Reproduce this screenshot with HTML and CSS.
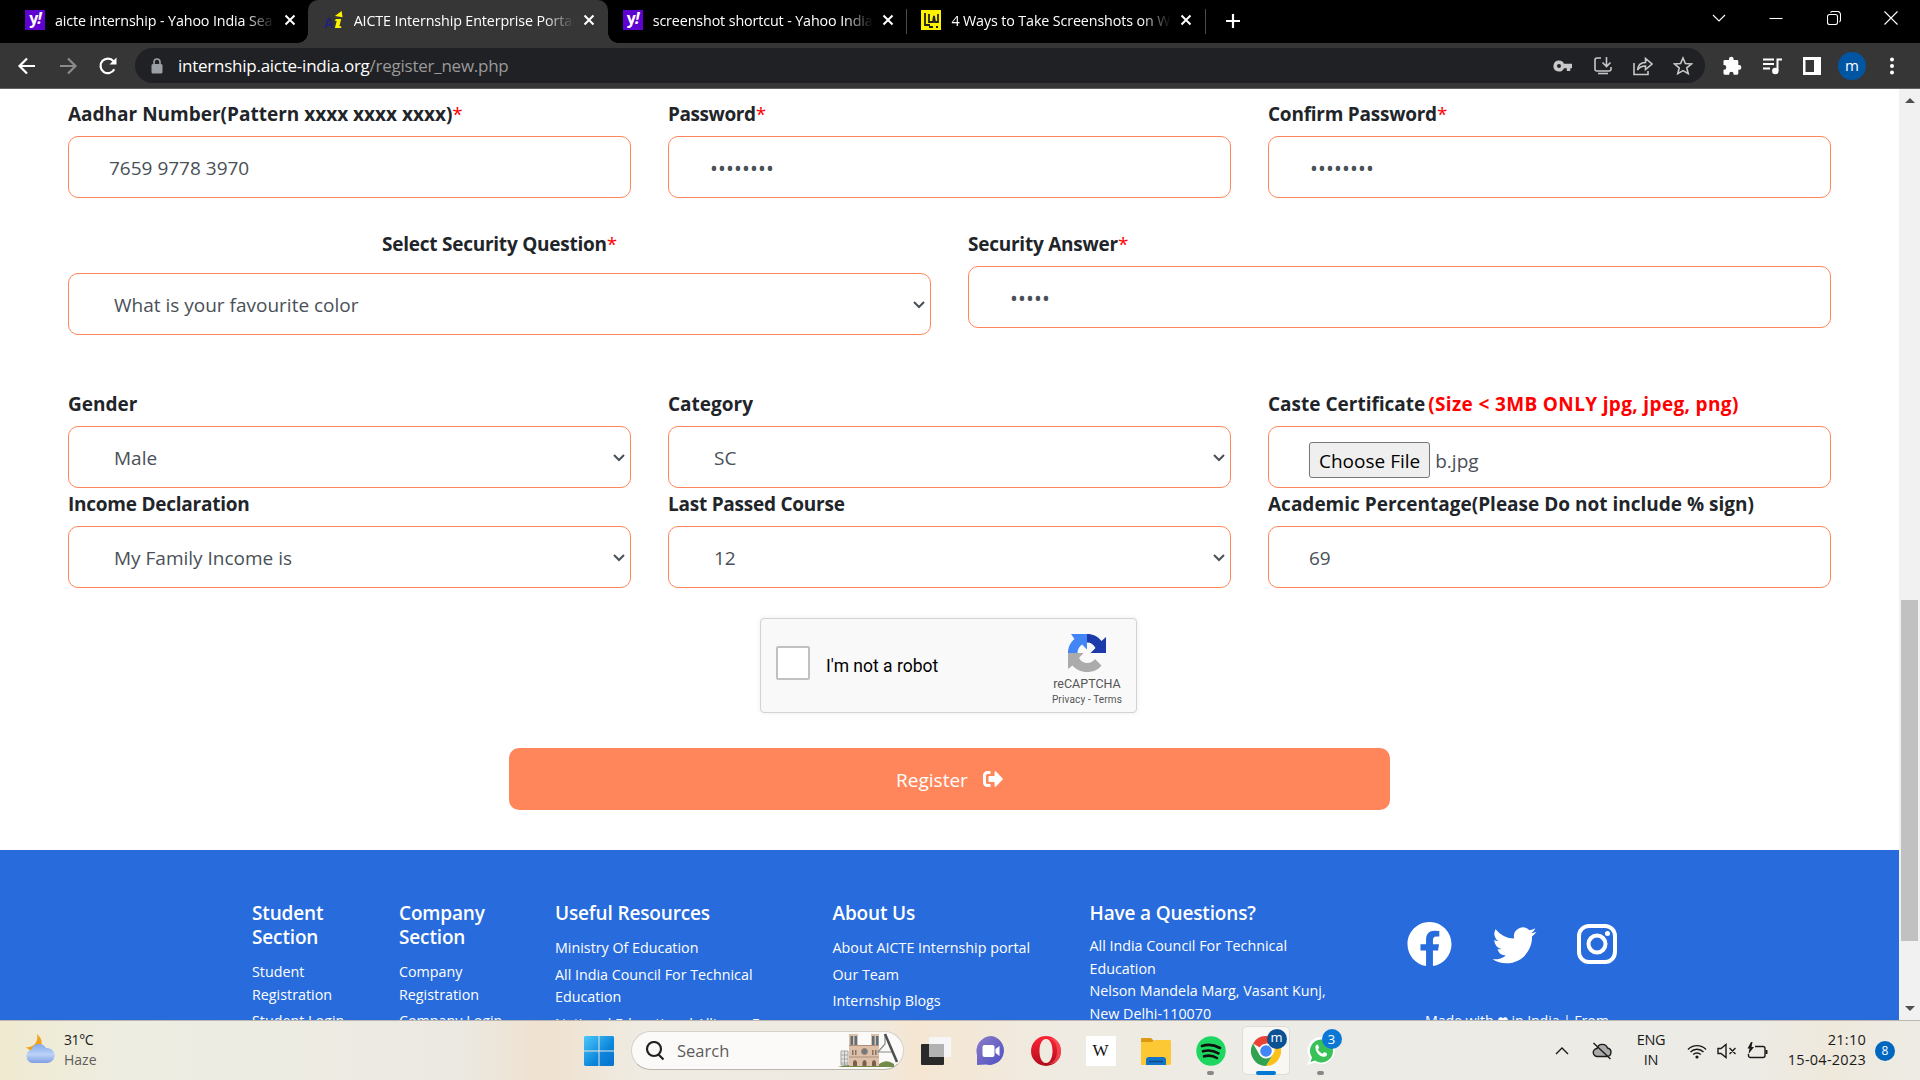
FILE: index.html
```html
<!DOCTYPE html>
<html lang="en">
<head>
<meta charset="utf-8">
<title>AICTE Internship Enterprise Portal</title>
<link rel="stylesheet" href="styles.css">
</head>
<body>
<div class="screen">
  <header class="tabstrip">
    <div class="tab">
      <span class="favicon yahoo">y<i>!</i></span><span class="tab-title">aicte internship - Yahoo India Sea</span>
      <svg class="tab-close" viewBox="0 0 12 12"><path d="M1.5 1.5l9 9M10.5 1.5l-9 9"/></svg>
    </div>
    <div class="tab active">
      <span class="favicon aicte"><b>A</b><svg viewBox="0 0 10 22"><path d="M1 6.500L8.500 1l1 7z"/><path d="M2 10h6L6 18h2v2H1l2-8H1z"/></svg></span><span class="tab-title">AICTE Internship Enterprise Portal</span>
      <svg class="tab-close" viewBox="0 0 12 12"><path d="M1.5 1.5l9 9M10.5 1.5l-9 9"/></svg>
    </div>
    <div class="tab divided">
      <span class="favicon yahoo">y<i>!</i></span><span class="tab-title">screenshot shortcut - Yahoo India</span>
      <svg class="tab-close" viewBox="0 0 12 12"><path d="M1.5 1.5l9 9M10.5 1.5l-9 9"/></svg>
    </div>
    <div class="tab divided">
      <span class="favicon lw"><svg viewBox="0 0 20 20"><path d="M4 3v12h5M8 4v8h4l1-6 1 6h3V4M8 17h4M15 17h2" fill="none" stroke="#222" stroke-width="1.8"/></svg></span><span class="tab-title">4 Ways to Take Screenshots on Wi</span>
      <svg class="tab-close" viewBox="0 0 12 12"><path d="M1.5 1.5l9 9M10.5 1.5l-9 9"/></svg>
    </div>
    <svg class="new-tab" viewBox="0 0 16 16"><path d="M8 1v14M1 8h14"/></svg>
    <div class="window-controls">
      <svg viewBox="0 0 14 14"><path d="M1 4l6 6 6-6"/></svg>
      <svg viewBox="0 0 14 14"><path d="M.5 7.5h13"/></svg>
      <svg viewBox="0 0 14 14"><path d="M2.5 3.5h6a2 2 0 012 2v6a2 2 0 01-2 2h-6a2 2 0 01-2-2v-6a2 2 0 012-2zM3.5 1.5q.5-1 2-1h5a3 3 0 013 3v5q0 2-1 2.500"/></svg>
      <svg viewBox="0 0 14 14"><path d="M.5.5l13 13M13.500.5l-13 13"/></svg>
    </div>
  </header>

  <nav class="toolbar">
    <div class="nav-buttons">
      <svg viewBox="0 0 20 20"><path d="M18 10H3M10 2.500L2.500 10l7.500 7.500"/></svg>
      <svg class="dim" viewBox="0 0 20 20"><path d="M2 10h15M10 2.500l7.500 7.500-7.500 7.500"/></svg>
      <svg viewBox="0 0 20 20"><path d="M16.300 13.300A7.300 7.300 0 1115.500 5.200"/><path d="M18.500 1.500v7h-7z" fill="#fff" stroke="none"/></svg>
    </div>
    <div class="omnibox">
      <svg class="lock" viewBox="0 0 12 16"><rect x=".5" y="6" width="11" height="9.500" rx="1.500" fill="#9aa0a6"/><path d="M3 7V4a3 3 0 016 0v3" fill="none" stroke="#9aa0a6" stroke-width="1.600"/></svg>
      <span class="url">internship.aicte-india.org<span>/register_new.php</span></span>
      <div class="omni-icons">
        <svg viewBox="0 0 20 20"><path fill="#c7c7c7" fill-rule="evenodd" d="M6 4.500a5.500 5.500 0 015 3.300h8v4.400h-1.700V15h-3.500v-2.800H11A5.500 5.500 0 116 4.500zM6 8a2 2 0 100 4 2 2 0 000-4z"/></svg>
        <svg viewBox="0 0 20 20"><path class="ln" d="M8 2H4a2 2 0 00-2 2v9a2 2 0 002 2h12a2 2 0 002-2v-2M13.500 1v9M9.500 6.500l4 4 4-4"/><path class="ln" d="M5 17.500h10" stroke-width="3"/></svg>
        <svg viewBox="0 0 20 20"><path class="ln" d="M1 7v11.500h14V15M4.500 14C5 9 8 6.500 12.500 6.500V2.500L19 8l-6.500 5.500V10C9 10 6.500 11 4.500 14z"/></svg>
        <svg viewBox="0 0 20 20"><path class="ln" d="M10 2l2.400 5.500 6 .5-4.600 3.900 1.400 5.800L10 14.600l-5.200 3.100 1.400-5.800L1.600 8l6-.5z"/></svg>
      </div>
    </div>
    <div class="tool-icons">
      <svg viewBox="0 0 20 20"><path fill="#fff" d="M7 4V3a2.300 2.300 0 014.600 0v1H15a1.300 1.300 0 011.300 1.300V9h.7a2.400 2.400 0 010 4.800h-.7v3.400A1.500 1.500 0 0115 18.800h-3.400V18a2.200 2.200 0 00-4.400 0v.8H3a1.500 1.500 0 01-1.500-1.500v-3.600H2a2.300 2.300 0 000-4.600h-.5V5.300A1.300 1.300 0 012.800 4z"/></svg>
      <svg viewBox="0 0 20 20"><path fill="none" stroke="#fff" stroke-width="2" d="M1 3.500h11M1 8h11M1 12.500h7M15.500 15V3.500H20"/><circle cx="13.300" cy="15" r="3.200" fill="#fff"/></svg>
      <svg viewBox="0 0 20 20"><path fill="#fff" fill-rule="evenodd" d="M1 1h18v18H1zM3.500 4v12H12V4z"/></svg>
      <span class="avatar">m</span>
      <svg viewBox="0 0 20 20"><g fill="#fff"><circle cx="10" cy="3.500" r="2"/><circle cx="10" cy="10" r="2"/><circle cx="10" cy="16.500" r="2"/></g></svg>
    </div>
  </nav>

  <div class="viewport">
    <main class="page">
      <form class="form">
        <div class="row">
          <div class="field"><label>Aadhar Number(Pattern xxxx xxxx xxxx)<em>*</em></label><div class="box">7659 9778 3970</div></div>
          <div class="field"><label class="tight">Password<em>*</em></label><div class="box dots">••••••••</div></div>
          <div class="field"><label class="snug">Confirm Password<em>*</em></label><div class="box dots">••••••••</div></div>
        </div>
        <div class="row security">
          <div class="field question"><label class="snug">Select Security Question<em>*</em></label><div class="box select">What is your favourite color<svg viewBox="0 0 12 8"><path d="M1 1l5 5 5-5"/></svg></div></div>
          <div class="field"><label class="snug">Security Answer<em>*</em></label><div class="box dots">•••••</div></div>
        </div>
        <div class="row profile">
          <div class="field"><label>Gender</label><div class="box select">Male<svg viewBox="0 0 12 8"><path d="M1 1l5 5 5-5"/></svg></div></div>
          <div class="field"><label>Category</label><div class="box select">SC<svg viewBox="0 0 12 8"><path d="M1 1l5 5 5-5"/></svg></div></div>
          <div class="field"><label>Caste Certificate <em class="note">(Size &lt; 3MB ONLY jpg, jpeg, png)</em></label><div class="box file"><span class="choose">Choose File</span><span>b.jpg</span></div></div>
        </div>
        <div class="row">
          <div class="field"><label class="snug">Income Declaration</label><div class="box select">My Family Income is<svg viewBox="0 0 12 8"><path d="M1 1l5 5 5-5"/></svg></div></div>
          <div class="field"><label class="snug">Last Passed Course</label><div class="box select">12<svg viewBox="0 0 12 8"><path d="M1 1l5 5 5-5"/></svg></div></div>
          <div class="field"><label>Academic Percentage(Please Do not include % sign)</label><div class="box">69</div></div>
        </div>
        <div class="captcha">
          <span class="checkbox"></span>
          <span class="robot">I'm not a robot</span>
          <div class="brand">
            <svg viewBox="0 0 40 40">
              <path fill="#1c3aa9" d="M20 1c6 0 11 2.600 14.500 7L39 4v16H23.500l5-5c-1.700-3.500-4.500-5.500-8.500-5.500z"/>
              <path fill="#4285f4" d="M20 1v15.500l-5-5c-3 2-4.500 5-4.500 8.500H1c0-6 2.500-10.500 6.500-14L4 1z"/>
              <path fill="#ababab" d="M1 20h15.500l-4.500 5c2 3.200 4.700 5 8 5 3.500 0 6-1.300 8-4l6.500 6.500C31 37 26 39 20 39c-6 0-11-2.500-14.500-6.500L1 36z"/>
            </svg>
            <span class="recaptcha">reCAPTCHA</span>
            <span class="terms">Privacy - Terms</span>
          </div>
        </div>
        <div class="register"><span>Register</span><svg viewBox="0 0 20 16"><path d="M7.500 1.500H4.500a3 3 0 00-3 3v7a3 3 0 003 3h3" fill="none" stroke="#fff" stroke-width="3"/><path fill="#fff" d="M11.500 1.200c0-1 .9-1.300 1.500-.6l6.500 6.600c.4.400.4 1.100 0 1.500L13 15.400c-.7.700-1.500.3-1.500-.6V11h-5c-.6 0-1-.4-1-1V6c0-.6.4-1 1-1h5z"/></svg></div>
      </form>
      <footer class="footer">
        <div class="col narrow"><h4>Student<br>Section</h4><p>Student<br>Registration</p><p>Student Login</p></div>
        <div class="col narrow"><h4>Company<br>Section</h4><p>Company<br>Registration</p><p>Company Login</p></div>
        <div class="col"><h4>Useful Resources</h4><p>Ministry Of Education</p><p>All India Council For Technical<br>Education</p><p>National Educational Alliance For</p></div>
        <div class="col"><h4>About Us</h4><p>About AICTE Internship portal</p><p>Our Team</p><p>Internship Blogs</p></div>
        <div class="col address"><h4>Have a Questions?</h4><p>All India Council For Technical<br>Education<br>Nelson Mandela Marg, Vasant Kunj,<br>New Delhi-110070</p></div>
        <div class="social">
          <div class="social-icons">
            <svg viewBox="0 0 16 16"><path d="M16 8.049c0-4.446-3.582-8.050-8-8.050C3.580 0-.002 3.603-.002 8.050c0 4.017 2.926 7.347 6.750 7.951v-5.625h-2.030V8.050H6.750V6.275c0-2.017 1.195-3.131 3.022-3.131.876 0 1.791.157 1.791.157v1.980h-1.009c-.993 0-1.303.621-1.303 1.258v1.510h2.218l-.354 2.326H9.250V16c3.824-.604 6.750-3.934 6.750-7.951z"/></svg>
            <svg viewBox="0 0 16 16"><path d="M5.026 15c6.038 0 9.341-5.003 9.341-9.334 0-.14 0-.282-.006-.422A6.685 6.685 0 0 0 16 3.542a6.658 6.658 0 0 1-1.889.518 3.301 3.301 0 0 0 1.447-1.817 6.533 6.533 0 0 1-2.087.793A3.286 3.286 0 0 0 7.875 6.030a9.325 9.325 0 0 1-6.767-3.429 3.289 3.289 0 0 0 1.018 4.382A3.323 3.323 0 0 1 .640 6.575v.045a3.288 3.288 0 0 0 2.632 3.218 3.203 3.203 0 0 1-.865.115 3.230 3.230 0 0 1-.614-.057 3.283 3.283 0 0 0 3.067 2.277A6.588 6.588 0 0 1 .780 13.580a6.320 6.320 0 0 1-.780-.045A9.344 9.344 0 0 0 5.026 15z"/></svg>
            <svg class="insta" viewBox="0 0 40 40"><rect x="2" y="2" width="36" height="36" rx="10"/><circle cx="20" cy="20" r="8.500"/><circle class="fill" cx="30.500" cy="9.500" r="2.500"/></svg>
          </div>
          <p>Made with <svg class="heart" viewBox="0 0 10 9"><path d="M5 9L.8 4.800C-1 2 1.500-.8 4 .6L5 1.400 6 .6c2.500-1.400 5 1.400 3.200 4.200z"/></svg> in India | From</p>
        </div>
      </footer>
    </main>
    <div class="scrollbar"><span class="up"></span><span class="thumb"></span><span class="down"></span></div>
  </div>

  <div class="taskbar">
    <div class="weather">
      <svg viewBox="0 0 30 30">
        <defs><linearGradient id="cl" x1="0" y1="0" x2="0" y2="1"><stop offset="0" stop-color="#84a9ec"/><stop offset=".55" stop-color="#bcd2f7"/><stop offset="1" stop-color="#7f9fe4"/></linearGradient></defs>
        <path d="M12 0c5 4 7 11 1 15-4 3-9 2-12-2 6 1 13-4 11-13z" fill="#f0a21c"/>
        <path d="M7 29a7 7 0 01-.5-13.500A8 8 0 0121 14a7.500 7.500 0 012 15z" fill="url(#cl)"/>
      </svg>
      <div><span>31°C</span><span class="haze">Haze</span></div>
    </div>
    <svg class="start" viewBox="0 0 30 30">
      <defs><linearGradient id="wn" gradientUnits="userSpaceOnUse" x1="0" y1="0" x2="30" y2="30"><stop offset="0" stop-color="#4cc8fa"/><stop offset=".6" stop-color="#0c86dc"/><stop offset="1" stop-color="#0670cc"/></linearGradient></defs>
      <path fill="url(#wn)" d="M1 0h13.500v14.500H0V1zM15.500 0H29l1 1v13.500H15.500zM0 15.500h14.500V30H1l-1-1zM15.500 15.500H30V29l-1 1H15.500z"/>
    </svg>
    <div class="search">
      <svg class="glass" viewBox="0 0 20 20"><circle cx="9" cy="8" r="7"/><path d="M13.500 13.500l5 5"/></svg>
      <span>Search</span>
      <svg class="cathedral" viewBox="0 0 62 36">
        <path d="M0 34q8-3 18-2h22q8-7 16-1v3z" fill="#728b48"/>
        <path d="M3 18h7v14H3z" fill="#e6e6e6" stroke="#a5a5a5"/><path d="M3 22h7M3 26h7M3 30h7M6.500 18v14" stroke="#a5a5a5" fill="none"/>
        <path d="M11 1h9v11h13V1h8v32H11z" fill="#dcc0aa"/>
        <path d="M12.500 3h2.500v9h-2.500zM16.500 3H19v9h-2.500zM34 3h2.500v9H34zM38 3h2.500v9H38z" fill="#5b7078"/>
        <path d="M11 12.500h30M11 24h30" stroke="#b08e78" stroke-width="1.200"/>
        <circle cx="26.500" cy="18.500" r="3" fill="#6b7a80" stroke="#a5846f"/>
        <path d="M15 33v-4q2-4 4 0v4zM24.500 33v-4q2-4 4 0v4zM34 33v-4q2-4 4 0v4z" fill="#7d5d4e"/>
        <path d="M14 17h1.500v5H14zM17 17h1.500v5H17zM34 17h1.500v5H34zM37 17h1.500v5H37z" fill="#8b7264"/>
        <path d="M47 1v10l-7 8h14" stroke="#8a8a8a" stroke-width="1.200" fill="none"/><path d="M47 1l12 28" stroke="#4e4e50" stroke-width="2.500" fill="none"/>
      </svg>
    </div>
    <div class="apps">
      <div class="app"><svg viewBox="0 0 30 30"><rect y="8" width="23" height="21" rx="1" fill="#292929"/><rect x="8" y="1" width="22" height="20" rx="1" fill="#f6f6f6"/><path d="M8 8h15v13H8z" fill="#b2b2b2"/></svg></div>
      <div class="app"><svg viewBox="0 0 30 30"><defs><linearGradient id="ch" x1="0" y1="0" x2="1" y2="1"><stop offset="0" stop-color="#8d7cc8"/><stop offset="1" stop-color="#4d50c4"/></linearGradient></defs><path d="M15 0a14.500 14.500 0 11-5 28.500L1 29V19A15 15 0 0115 0z" fill="url(#ch)"/><rect x="6.500" y="9" width="12" height="12" rx="2" fill="#fff"/><path d="M19.500 13l4-3v10l-4-3z" fill="#fff"/></svg></div>
      <div class="app"><svg viewBox="0 0 30 30"><defs><linearGradient id="op" x1="0" y1="0" x2="0" y2="1"><stop offset="0" stop-color="#ff2436"/><stop offset="1" stop-color="#b00c1c"/></linearGradient></defs><path fill="url(#op)" fill-rule="evenodd" d="M15 0a15 15 0 110 30 15 15 0 010-30zm0 3c-4.500 0-6.500 6-6.500 12S10.500 27 15 27s6.500-6 6.500-12S19.500 3 15 3z"/><path d="M18 2c6 2 8 7 8 13s-2 11-8 13c8 0 12-6 12-13S26 2 18 2z" fill="#ff5a61" opacity=".65"/></svg></div>
      <div class="app"><span class="wiki">W</span></div>
      <div class="app"><svg viewBox="0 0 30 30"><path d="M0 3q0-1 1-1h9l3 3v6H0z" fill="#dc9a12"/><path d="M0 6h11l3-2h15l1 1v22q0 2-2 2H0z" fill="#fcc934"/><path d="M5 29v-5q0-3 3-3h14q3 0 3 3v5z" fill="#1573c7"/><path d="M8 25.500h14" stroke="#0a4b8c" stroke-width="1.500"/></svg></div>
      <div class="app"><svg viewBox="0 0 30 30"><circle cx="15" cy="15" r="14.700" fill="#1ed760"/><path d="M6 10q9-3 18 2M7 15.300q8-2.300 15.500 2M8 20.300q7-2 13 1.700" fill="none" stroke="#101010" stroke-width="2.600" stroke-linecap="round"/></svg><i class="dot"></i></div>
      <div class="app current"><svg viewBox="0 0 30 30"><path d="M15 15L2 7.500A15 15 0 0128 7.500H15z" fill="#ea4335"/><path d="M28 7.500A15 15 0 0115 30l6.500-11.200A7.500 7.500 0 0021.500 8V7.500z" fill="#fbc116"/><path d="M2 7.500l6.500 11.300q2.500 3.700 6.500 3.700 4 0 6.500-3.700L15 30A15 15 0 012 7.500z" fill="#2fa34f"/><circle cx="15" cy="15" r="7.300" fill="#fff"/><circle cx="15" cy="15" r="5.800" fill="#4285f4"/></svg><b class="badge profile-badge">m</b><i class="dot"></i></div>
      <div class="app"><svg viewBox="0 0 30 30"><path d="M15 1a13.500 13.500 0 11-6 25.500L1 29l2.500-7.500A13.500 13.500 0 0115 1z" fill="#fff"/><path d="M15 3.500a11.500 11.500 0 11-6 21L4.500 26l1.500-4.500a11.500 11.500 0 019-18z" fill="#38c156"/><path d="M9.500 10c1-2 2.500-2 3 0l.7 1.800-1.200 1.700c1 2 2.500 3.400 4.700 4.200l1.500-1.600 2.800 1.300c.5 2.500-2 3.600-4 3.300-5-1-8-5.700-7.500-10.700z" fill="#fff"/></svg><b class="badge">3</b><i class="dot"></i></div>
    </div>
    <div class="tray">
      <svg class="caret" viewBox="0 0 14 8"><path d="M1 7l6-6 6 6"/></svg>
      <svg class="cloud" viewBox="0 0 20 18"><path fill="#aaa" d="M5.500 14.500a4 4 0 01-.5-8A5.500 5.500 0 0115.500 6a4.300 4.300 0 01-.5 8.500z"/><path d="M1.500 1l17 16"/></svg>
      <div class="lang">ENG<br>IN</div>
      <svg class="wifi" viewBox="0 0 20 16"><path d="M1 6.500a12.500 12.500 0 0118 0M3.500 9a9 9 0 0113 0M6.200 11.500a5.500 5.500 0 017.600 0"/><circle cx="10" cy="14" r="1.600" fill="#1a1a1a" stroke="none"/></svg>
      <svg class="mute" viewBox="0 0 20 16"><path d="M1 5.500h3L9 1.500v13l-5-4H1zM12.500 5l6 6M18.500 5l-6 6"/></svg>
      <svg class="battery" viewBox="0 0 21 18"><path d="M8 4.500h8a2 2 0 012 2v7a2 2 0 01-2 2H3.500a2 2 0 01-2-2V12"/><path d="M19.500 8v4" stroke-width="2"/><path d="M4 0L.5 6.500h2L1.500 12 7 5H4.500L5.500 0z" fill="#1a1a1a" stroke="none"/></svg>
      <div class="clock">21:10<br>15-04-2023</div>
      <b class="count">8</b>
    </div>
  </div>
</div>
</body>
</html>
```
FILE: styles.css
```css
* { box-sizing: border-box; }
body { margin: 0; font-family: "Open Sans", "Noto Sans", sans-serif; color: #212529; }
svg { display: block; flex: none; }
h4, p { margin: 0; }
.screen { width: 1920px; height: 1080px; overflow: hidden; display: flex; flex-direction: column; background: #fff; }

/* tab strip */
.tabstrip { height: 43px; flex: none; background: #000; display: flex; align-items: stretch; padding-left: 10px; }
.tab { width: 298.700px; display: flex; align-items: center; padding: 0 12px 3px 15px; color: #fff; position: relative; }
.tab.active { background: #363636; border-radius: 10px 10px 0 0; width: 300px; margin: 0 -.5px; padding-left: 15.500px; }
.tab.active::before, .tab.active::after { content: ""; position: absolute; bottom: 0; width: 10px; height: 10px; }
.tab.active::before { left: -10px; background: radial-gradient(circle at 0 0, transparent 9.500px, #363636 10px); }
.tab.active::after { right: -10px; background: radial-gradient(circle at 100% 0, transparent 9.500px, #363636 10px); }
.tab.divided::after { content: ""; position: absolute; right: -1px; top: 9px; width: 1px; height: 25px; background: #4a4a4a; }
.favicon { width: 20px; height: 20px; flex: none; margin-right: 10px; }
.yahoo { background: #5f01d1; color: #fff; font: bold 16px/17px "Open Sans", sans-serif; text-align: center; letter-spacing: -1px; }
.aicte { display: flex; align-items: flex-end; color: #22207c; font: bold 14px/13px "Liberation Sans", sans-serif; }
.aicte svg { width: 9px; height: 20px; fill: #fff200; }
.lw { background: #fff200; }
.tab-title { width: 220px; flex: none; overflow: hidden; white-space: nowrap; font-size: 14.300px; letter-spacing: -.12px; -webkit-mask-image: linear-gradient(90deg, #000 190px, transparent 220px); mask-image: linear-gradient(90deg, #000 190px, transparent 220px); }
.tab-close { width: 12px; height: 12px; margin-left: 9px; fill: none; stroke: #fff; stroke-width: 2; }
.new-tab { width: 16px; height: 16px; margin: 13px 0 0 20px; fill: none; stroke: #fff; stroke-width: 2.200; }
.window-controls { margin-left: auto; display: flex; gap: 43.500px; padding: 11px 22px 0 0; }
.window-controls svg { width: 14px; height: 14px; fill: none; stroke: #fff; stroke-width: 1.100; }

/* toolbar */
.toolbar { height: 46px; flex: none; background: #363636; border-bottom: 1px solid #626262; display: flex; align-items: center; padding-left: 17px; }
.nav-buttons { display: flex; gap: 20.500px; width: 118px; }
.nav-buttons svg { width: 20px; height: 20px; fill: none; stroke: #fff; stroke-width: 2.200; }
.nav-buttons .dim { stroke: #8b8b8b; }
.omnibox { width: 1570px; height: 35px; border-radius: 18px; background: #202124; display: flex; align-items: center; padding: 0 12.500px 0 16px; }
.lock { width: 12px; height: 16px; margin-right: 15px; }
.url { color: #fff; font-size: 17px; letter-spacing: -.25px; }
.url span { color: #9a9a9a; }
.omni-icons { margin-left: auto; display: flex; gap: 20px; }
.omni-icons svg { width: 20px; height: 20px; }
.ln { fill: none; stroke: #c7c7c7; stroke-width: 1.600; }
.tool-icons { display: flex; align-items: center; gap: 20px; margin-left: 17px; }
.tool-icons svg { width: 20px; height: 20px; }
.avatar { width: 28px; height: 28px; margin: 0 -4px; border-radius: 50%; background: #0056a3; color: #fff; font-size: 15px; line-height: 26px; text-align: center; }

/* page */
.viewport { flex: 1; min-height: 0; display: flex; overflow: hidden; }
.page { width: 1899px; overflow: hidden; display: flex; flex-direction: column; }
.form { height: 761px; flex: none; padding: 10px 68px 0; display: flex; flex-direction: column; }
.row { display: flex; gap: 37px; height: 100px; flex: none; }
.security { margin-top: 30px; }
.profile { margin-top: 60px; }
.field { flex: 1; }
label { display: block; height: 30px; margin-bottom: 7px; font-size: 19px; line-height: 30px; font-weight: 700; white-space: nowrap; letter-spacing: 0; }
label.snug { letter-spacing: -.24px; }
label.tight { letter-spacing: -.42px; }
label em { font-style: normal; font-weight: 400; color: #f00; }
label em.note { font-weight: 700; letter-spacing: .35px; margin-left: -2px; }
.question { text-align: center; }
.question label { margin-bottom: 14px; }
.box { height: 62px; border: 1px solid #ff865b; border-radius: 10px; padding: 2px 12px 0 40px; display: flex; align-items: center; color: #495057; font-size: 19px; white-space: nowrap; }
.dots { padding-left: 41px; font-size: 21px; letter-spacing: .1px; }
.select { padding: 2px 5px 0 45px; text-align: left; }
.select svg { width: 12px; height: 8px; margin-left: auto; fill: none; stroke: #495057; stroke-width: 2; }
.file { padding-top: 8px; gap: 5px; }
.choose { height: 36px; margin-top: -2px; padding: 0 9px; border: 1px solid #767676; border-radius: 3px; background: #efefef; color: #000; line-height: 36px; }

.captcha { width: 377px; height: 95px; margin: 29px 0 0 692px; flex: none; border: 1px solid #d3d3d3; border-radius: 4px; background: #f9f9f9; box-shadow: 0 0 5px rgba(0,0,0,.08); display: flex; padding-left: 15px; font-family: Roboto, sans-serif; }
.checkbox { width: 34px; height: 34px; margin: 27px 16px 0 0; border: 2px solid #c1c1c1; border-radius: 2px; background: #fff; }
.robot { line-height: 94px; font-size: 17.500px; color: #000; }
.brand { width: 70px; margin: 14px 14px 0 auto; display: flex; flex-direction: column; align-items: center; color: #555; }
.brand svg { width: 40px; height: 40px; }
.recaptcha { font-size: 12.500px; line-height: 16px; margin-top: 3px; }
.terms { font-size: 10px; line-height: 14px; margin-top: 1px; letter-spacing: .15px; white-space: nowrap; }
.register { width: 881px; height: 62px; margin: 35px 0 0 441px; flex: none; border-radius: 10px; background: #ff865b; color: #fff; font-size: 19px; display: flex; align-items: center; justify-content: center; gap: 15px; }
.register span { padding-top: 2px; }
.register svg { width: 20px; height: 16px; }

/* footer */
.footer { height: 170px; flex: none; background: #276bdc; color: #fff; padding: 51px 0 0 252px; overflow: hidden; display: grid; grid-template-columns: 147px 156px 277.500px 257px 317.500px 1fr; white-space: nowrap; }
h4 { font-size: 19px; line-height: 24px; font-weight: 600; letter-spacing: -.15px; margin-bottom: 12px; }
.col p { font-size: 14.300px; line-height: 22.500px; margin-bottom: 4px; }
.narrow h4 { margin-bottom: 11px; }
.narrow p { line-height: 23px; margin-bottom: 3px; }
.address h4 { margin-bottom: 10px; }
.social { padding-top: 21px; }
.social-icons { display: flex; align-items: center; gap: 40px; }
.social-icons svg { width: 45px; height: 44px; fill: #fff; }
.social-icons .insta { width: 40px; height: 40px; fill: none; stroke: #fff; stroke-width: 4; }
.social-icons .insta .fill { fill: #fff; stroke: none; }
.social p { font-size: 14.300px; line-height: 22px; margin: 44px 0 0 18px; display: flex; align-items: center; gap: 4px; letter-spacing: -.15px; }
.heart { width: 10px; height: 9px; fill: #fff; }

.scrollbar { width: 21px; background: #f1f1f1; display: flex; flex-direction: column; align-items: center; padding: 9px 0; }
.up, .down { border: 5px solid transparent; flex: none; }
.up { border-top: 0; border-bottom-color: #505050; }
.down { border-bottom: 0; border-top-color: #505050; margin-top: auto; }
.thumb { width: 17px; height: 341px; margin-top: 497px; background: #c1c1c1; }

/* taskbar */
.taskbar { height: 60px; flex: none; border-top: 1px solid #bab7b0; background: linear-gradient(90deg, #f0ead0 0, #ededE2 130px, #ece9e2 460px, #efe1cf 545px, #efebe2 640px, #eeeae2 860px, #f5e6d2 915px, #efebe2 1060px, #ecebe6 1300px, #ecebe6 1740px, #efe9dc 1830px, #edebe5 1920px); display: flex; align-items: center; }
.weather { display: flex; align-items: center; gap: 9px; width: 584px; padding-left: 25px; }
.weather > svg { width: 30px; height: 30px; margin-top: -3px; }
.weather div { display: flex; flex-direction: column; margin-top: -2px; font-size: 14px; line-height: 20px; color: #1a1a1a; letter-spacing: -.4px; }
.weather .haze { color: #5e5e5a; letter-spacing: 0; }
.start { width: 30px; height: 30px; }
.search { width: 273px; height: 39px; margin-left: 17px; border: 1px solid #d6d2cb; border-bottom-color: #b9b6b0; border-radius: 20px; background: #fbfaf8; display: flex; align-items: center; padding: 0 3px 0 13px; color: #5c5c5c; font-size: 16.500px; }
.glass { width: 20px; height: 20px; margin-right: 12px; fill: none; stroke: #222; stroke-width: 2.200; }
.cathedral { width: 62px; height: 36px; margin-left: auto; }
.apps { display: flex; margin-left: 4px; }
.app { width: 55px; height: 59px; display: flex; align-items: center; justify-content: center; position: relative; }
.app > svg { width: 30px; height: 30px; position: relative; }
.wiki { width: 30px; height: 30px; background: #fff; color: #111; font: 17px/30px "Liberation Serif", serif; text-align: center; }
.current::before { content: ""; position: absolute; inset: 5px 3px 5px 4px; border: 1px solid #dddcd6; border-radius: 5px; background: #f8f7f4; }
.dot { position: absolute; bottom: 5px; left: 24px; width: 7px; height: 4px; border-radius: 2px; background: #888; }
.current .dot { left: 18px; width: 20px; background: #0078d4; }
.badge { position: absolute; left: 28.500px; top: 8px; width: 20px; height: 20px; border-radius: 50%; background: #0a78d4; color: #fff; font-weight: 400; font-size: 13px; line-height: 20px; text-align: center; }
.profile-badge { background: #0b5294; line-height: 17px; }
.tray { margin-left: auto; display: flex; align-items: center; color: #1a1a1a; font-size: 14.500px; line-height: 20px; padding-right: 25px; }
.tray svg { fill: none; stroke: #1a1a1a; stroke-width: 1.400; }
.caret { width: 14px; height: 8px; margin-right: 23px; }
.cloud { width: 20px; height: 18px; margin-right: 24px; }
.lang { text-align: center; width: 30px; letter-spacing: -.3px; margin: -1px 21px 0 0; }
.wifi { width: 20px; height: 16px; margin-right: 10px; }
.mute { width: 20px; height: 16px; margin-right: 10px; }
.battery { width: 21px; height: 18px; margin-right: 18px; }
.clock { text-align: right; width: 80px; margin-top: -2px; letter-spacing: .25px; white-space: nowrap; }
.count { width: 20px; height: 20px; margin-left: 9px; border-radius: 50%; background: #0067c0; color: #fff; font-size: 12px; font-weight: 400; line-height: 20px; text-align: center; }
```
